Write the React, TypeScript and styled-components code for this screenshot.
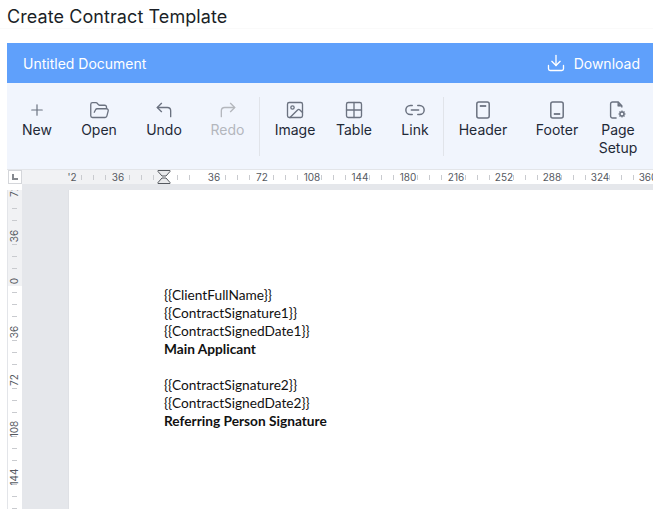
import React from "react";
import styled, { createGlobalStyle } from "styled-components";
import {
  Download,
  FolderOpen,
  Grid2x2,
  Image,
  Link2,
  Plus,
  CornerUpLeft,
  CornerUpRight,
} from "lucide-react";

const iconGrey = "#6b7280";
const H_LABELS = [
  { at: 72, text: "'2" },
  { at: 118, text: "36" },
  { at: 214, text: "36" },
  { at: 262, text: "72" },
  { at: 312, text: "108" },
  { at: 360, text: "144" },
  { at: 408, text: "180" },
  { at: 456, text: "216" },
  { at: 504, text: "252" },
  { at: 552, text: "288" },
  { at: 600, text: "324" },
  { at: 648, text: "360" },
];
const H_TICKS = [81, 93, 105, 129, 141, 153, 177, 189, 225, 237, 249, 273, 285, 297, 321, 333, 345, 369, 381, 393, 417, 429, 441, 465, 477, 489, 513, 525, 537, 561, 573, 585, 609, 621, 633];
const V_LABELS = [
  { at: 191, text: "72" },
  { at: 236, text: "36" },
  { at: 281, text: "0" },
  { at: 332, text: "36" },
  { at: 380, text: "72" },
  { at: 429, text: "108" },
  { at: 477, text: "144" },
];
const V_TICKS = [208, 220, 244, 256, 268, 292, 304, 316, 340, 352, 364, 388, 400, 412, 436, 448, 460, 484, 496, 508];

const GlobalStyle = createGlobalStyle`
  html, body {
    margin: 0;
    padding: 0;
    background: #fff;
    overflow: hidden;
  }
  body {
    font-family: Inter, "Liberation Sans", sans-serif;
  }
`;

const Page = styled.div`
  width: 653px;
  height: 509px;
  display: flex;
  flex-direction: column;
  overflow: hidden;
`;

const TitleBar = styled.div`
  height: 29px;
  margin-bottom: 14px;
  padding: 6px 0 0 7px;
  box-sizing: border-box;
  border-bottom: 1px solid #fafafa;
  font-size: 18px;
  line-height: 22px;
  letter-spacing: 0.08px;
  color: #1b1f27;
`;

const Editor = styled.div`
  flex: 1;
  min-height: 0;
  margin-left: 7px;
  display: flex;
  flex-direction: column;
`;

const Header = styled.div`
  height: 40px;
  flex: none;
  padding: 0 13px 0 16px;
  display: flex;
  align-items: center;
  justify-content: space-between;
  background: #5fa0fb;
  color: #fff;
  font-size: 14px;
`;

const DownloadButton = styled.div`
  display: flex;
  align-items: center;
  gap: 8px;
`;

const Toolbar = styled.div`
  height: 86px;
  flex: none;
  padding-left: 1px;
  display: flex;
  align-items: flex-start;
  background: #f1f5fd;
`;

const Tool = styled.div<{ $width: number; $offset?: number; $disabled?: boolean }>`
  width: ${({ $width }) => $width}px;
  margin-left: ${({ $offset }) => $offset ?? 0}px;
  flex: none;
  padding-top: 18px;
  display: flex;
  flex-direction: column;
  align-items: center;
  text-align: center;
  font-size: 14px;
  line-height: 18px;
  color: ${({ $disabled }) => ($disabled ? "#b4b7bd" : "#1f2937")};
`;

const ToolIcon = styled.div<{ $disabled?: boolean }>`
  height: 18px;
  margin-bottom: 2px;
  display: flex;
  align-items: center;
  justify-content: center;
  color: ${({ $disabled }) => ($disabled ? "#b4b7bd" : iconGrey)};
`;

const Divider = styled.div`
  width: 1px;
  height: 59px;
  margin-top: 14px;
  flex: none;
  background: #e1e4ea;
`;

const RulerRow = styled.div`
  height: 15px;
  flex: none;
  display: flex;
  padding-left: 1px;
  border-top: 1px solid #e3e5e9;
  box-sizing: border-box;
`;

const Corner = styled.div`
  width: 14px;
  height: 14px;
  flex: none;
  box-sizing: border-box;
  border: 1px solid #d4d6da;
  background: #fff;
  display: flex;
  align-items: center;
  justify-content: center;
`;

const CornerMark = styled.div`
  width: 6px;
  height: 6px;
  border-left: 2px solid #85898f;
  border-bottom: 2px solid #85898f;
  box-sizing: border-box;
`;

const HRuler = styled.div`
  position: relative;
  flex: 1;
  background: linear-gradient(to right, #f1f2f4 0, #f1f2f4 142px, #fff 142px);
  overflow: hidden;
`;

const HMark = styled.span`
  position: absolute;
  top: 0;
  transform: translateX(-50%);
  font-size: 10px;
  line-height: 14px;
  color: #55595f;
`;

const HTick = styled.span`
  position: absolute;
  top: 5px;
  width: 1px;
  height: 5px;
  background: #c9cbcf;
`;

const MarginHandle = styled.svg`
  position: absolute;
  left: 135px;
  top: 0;
`;

const Workspace = styled.div`
  flex: 1;
  min-height: 0;
  display: flex;
`;

const VRuler = styled.div`
  position: relative;
  width: 15px;
  flex: none;
  margin-top: 6px;
  border-left: 1px solid #e3e5e9;
  box-sizing: border-box;
  background: linear-gradient(to bottom, #f1f2f4 0, #f1f2f4 96px, #fff 96px);
  overflow: hidden;
`;

const VMark = styled.span`
  position: absolute;
  left: 0;
  width: 13px;
  text-align: center;
  font-size: 10px;
  line-height: 13px;
  color: #55595f;
  writing-mode: vertical-rl;
  transform: translateY(-50%) rotate(180deg);
`;

const VTick = styled.span`
  position: absolute;
  left: 4px;
  width: 5px;
  height: 1px;
  background: #c9cbcf;
`;

const Canvas = styled.div`
  flex: 1;
  min-width: 0;
  padding: 6px 0 0 47px;
  background: #e5e7eb;
`;

const Sheet = styled.div`
  height: 100%;
  padding: 96px 0 0 95px;
  box-sizing: border-box;
  background: #fff;
  box-shadow: -1px 0 0 #dfe1e5;
  font-family: Lato, "Liberation Sans", sans-serif;
  font-size: 13.7px;
  line-height: 18px;
  color: #111;
`;

const Line = styled.div<{ $bold?: boolean }>`
  height: 18px;
  white-space: nowrap;
  font-weight: ${({ $bold }) => ($bold ? 700 : 400)};
`;

const HeaderIcon = () => (
  <svg width="18" height="18" viewBox="0 0 18 18" fill="none" stroke="currentColor" strokeWidth="1.5">
    <rect x="2.8" y="1" width="12.4" height="16" rx="2" />
    <path d="M5.8 5h6.4" strokeWidth="1.8" />
  </svg>
);

const FooterIcon = () => (
  <svg width="18" height="18" viewBox="0 0 18 18" fill="none" stroke="currentColor" strokeWidth="1.5">
    <rect x="2.8" y="1" width="12.4" height="16" rx="2" />
    <path d="M5.8 13h6.4" strokeWidth="1.8" />
  </svg>
);

const PageSetupIcon = () => (
  <svg width="18" height="18" viewBox="0 0 18 18" fill="none" stroke="currentColor" strokeWidth="1.4">
    <path d="M7.6 17H3.6a2 2 0 0 1-2-2V3a2 2 0 0 1 2-2h5.6l3.6 3.8v1.8" />
    <path d="M8.8 1.4v3.8h3.6z" fill="currentColor" strokeWidth="0.6" />
    <circle cx="13" cy="13" r="2" />
    <path d="M13 9.4V11M13 15v1.6M9.4 13H11M15 13h1.6M10.5 10.5l1.1 1.1M14.4 14.4l1.1 1.1M10.5 15.5l1.1-1.1M14.4 11.6l1.1-1.1" strokeWidth="1.2" />
  </svg>
);

const App: React.FC = () => {
  return (
    <Page>
      <GlobalStyle />
      <TitleBar>Create Contract Template</TitleBar>
      <Editor>
        <Header>
          <span>Untitled Document</span>
          <DownloadButton>
            <Download size={20} strokeWidth={1.6} />
            <span>Download</span>
          </DownloadButton>
        </Header>
        <Toolbar>
          <Tool $width={58}>
            <ToolIcon><Plus size={18} strokeWidth={1.6} /></ToolIcon>
            New
          </Tool>
          <Tool $width={66}>
            <ToolIcon><FolderOpen size={21} strokeWidth={1.5} /></ToolIcon>
            Open
          </Tool>
          <Tool $width={64}>
            <ToolIcon><CornerUpLeft size={20} strokeWidth={1.6} /></ToolIcon>
            Undo
          </Tool>
          <Tool $width={63} $disabled>
            <ToolIcon $disabled><CornerUpRight size={20} strokeWidth={1.6} /></ToolIcon>
            Redo
          </Tool>
          <Divider />
          <Tool $width={70}>
            <ToolIcon><Image size={20} strokeWidth={1.6} /></ToolIcon>
            Image
          </Tool>
          <Tool $width={48}>
            <ToolIcon><Grid2x2 size={20} strokeWidth={1.6} /></ToolIcon>
            Table
          </Tool>
          <Tool $width={56} $offset={9}>
            <ToolIcon><Link2 size={22} strokeWidth={1.6} /></ToolIcon>
            Link
          </Tool>
          <Divider />
          <Tool $width={78}>
            <ToolIcon><HeaderIcon /></ToolIcon>
            Header
          </Tool>
          <Tool $width={70}>
            <ToolIcon><FooterIcon /></ToolIcon>
            Footer
          </Tool>
          <Tool $width={52}>
            <ToolIcon><PageSetupIcon /></ToolIcon>
            Page Setup
          </Tool>
        </Toolbar>
        <RulerRow>
          <Corner><CornerMark /></Corner>
          <HRuler>
            {H_TICKS.map((x) => (
              <HTick key={x} style={{ left: x - 22 }} />
            ))}
            {H_LABELS.map((m) => (
              <HMark key={m.at} style={{ left: m.at - 22 }}>{m.text}</HMark>
            ))}
            <MarginHandle width="14" height="14" viewBox="0 0 14 14" fill="#e9eaec" stroke="#55595f" strokeWidth="1">
              <path d="M1 .5h12v1L9 6H5L1 1.5zM5 8h4l4 4.5v1H1v-1z" />
            </MarginHandle>
          </HRuler>
        </RulerRow>
        <Workspace>
          <VRuler>
            {V_TICKS.map((y) => (
              <VTick key={y} style={{ top: y - 190 }} />
            ))}
            {V_LABELS.map((m) => (
              <VMark key={m.at} style={{ top: m.at - 190 }}>{m.text}</VMark>
            ))}
          </VRuler>
          <Canvas>
            <Sheet>
              <Line>{"{{ClientFullName}}"}</Line>
              <Line>{"{{ContractSignature1}}"}</Line>
              <Line>{"{{ContractSignedDate1}}"}</Line>
              <Line $bold>Main Applicant</Line>
              <Line />
              <Line>{"{{ContractSignature2}}"}</Line>
              <Line>{"{{ContractSignedDate2}}"}</Line>
              <Line $bold>Referring Person Signature</Line>
            </Sheet>
          </Canvas>
        </Workspace>
      </Editor>
    </Page>
  );
};

export default App;
